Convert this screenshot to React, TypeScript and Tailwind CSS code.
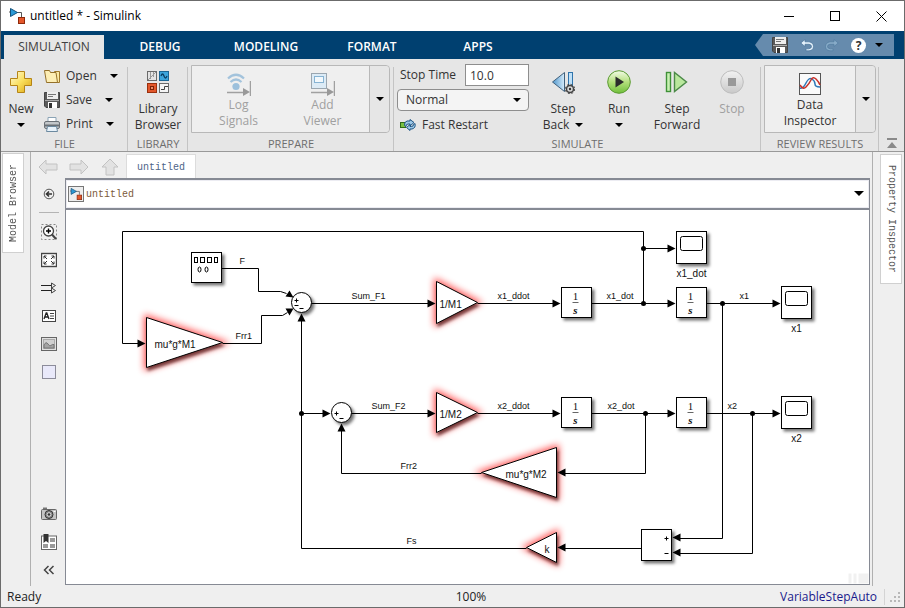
import type { ReactNode } from 'react';
import clsx from 'clsx';

const tabs = ['DEBUG', 'MODELING', 'FORMAT', 'APPS'];

function Caret({ className }: { className?: string }) {
  return (
    <svg width="8" height="4" viewBox="0 0 8 4" className={className} aria-hidden="true">
      <path d="M0 0h8L4 4z" fill="currentColor" />
    </svg>
  );
}

function ModelIcon({ size = 16 }: { size?: number }) {
  return (
    <svg width={size} height={size} viewBox="0 0 16 16" aria-hidden="true">
      <path d="M0 4h2M8 4.5h4.5V9" fill="none" stroke="#555" />
      <path d="M1.5 0.5v8l7-4z" fill="#2b9ad6" stroke="#14537d" />
      <rect x="9.5" y="9.5" width="6" height="6" fill="#e4572b" stroke="#8e2a0b" />
    </svg>
  );
}

function SaveIcon() {
  return (
    <svg width="16" height="16" viewBox="0 0 16 16" aria-hidden="true">
      <path d="M0.5 0.5h15v15H2L0.5 14z" fill="#5a5a5a" stroke="#444" />
      <rect x="3" y="0" width="11" height="7" fill="#eee" />
      <path d="M4 2.5h8M4 4.5h5" stroke="#777" />
      <path d="M1 8.5h14" stroke="#aaa" />
      <rect x="4" y="10" width="9" height="6" fill="#fff" />
      <rect x="5" y="11" width="3" height="5" fill="#333" />
    </svg>
  );
}

function OpenIcon() {
  return (
    <svg width="16" height="13" viewBox="0 0 16 13" aria-hidden="true">
      <path d="M5.500 11.500V2.500h4l1-1h5v11h-8z" fill="#fbe9a4" stroke="#a07a2c" />
      <path d="M0.500 0.500h5l1 2h5.500l1.500 10H2.500z" fill="#fdeeb4" stroke="#94702a" />
    </svg>
  );
}

function PrintIcon() {
  return (
    <svg width="16" height="15" viewBox="0 0 16 15" aria-hidden="true">
      <path d="M4 5V0.500h8V5" fill="#fff" stroke="#8aa3b5" />
      <rect x="0.500" y="4.500" width="15" height="7" rx="1.500" fill="#c3c7ca" stroke="#6b7177" />
      <path d="M1 8.500h14" stroke="#6a7076" strokeWidth="2" />
      <path d="M3.500 9.500h9l1 5H2.500z" fill="#e8f2fa" stroke="#6c8aa0" />
    </svg>
  );
}

function NewIcon() {
  return (
    <svg width="24" height="24" viewBox="0 0 24 24" aria-hidden="true">
      <defs>
        <linearGradient id="gold" x1="0" y1="0" x2="1" y2="1">
          <stop offset="0" stopColor="#fffbe0" />
          <stop offset="0.5" stopColor="#fadf5c" />
          <stop offset="1" stopColor="#d9a213" />
        </linearGradient>
      </defs>
      <path d="M8.500 1.500h7v7h7v7h-7v7h-7v-7h-7v-7h7z" fill="url(#gold)" stroke="#b58416" />
    </svg>
  );
}

function LibraryIcon() {
  return (
    <svg width="22" height="24" viewBox="0 0 22 24" aria-hidden="true">
      <rect x="0.500" y="1.500" width="9" height="9" fill="#e4e4e4" stroke="#6b6b6b" />
      <path d="M3.500 2v7M6.500 2v5M1 10l8-8" fill="none" stroke="#999" />
      <rect x="12.500" y="1.500" width="9" height="9" fill="#3da5dc" stroke="#1d6795" />
      <path d="M14 6q1.500-4 3 0t3 0" fill="none" stroke="#0c3f63" strokeWidth="1.300" />
      <rect x="0.500" y="13.500" width="9" height="9" fill="#e2572c" stroke="#9a300d" />
      <rect x="3.500" y="16.500" width="3" height="3" fill="#f08c68" stroke="#7a2206" />
      <rect x="12.500" y="13.500" width="9" height="9" fill="#f5f5f5" stroke="#6b6b6b" />
      <path d="M14 19.500h3.500v-3H21" fill="none" stroke="#444" />
    </svg>
  );
}

function LogSignalsIcon() {
  return (
    <svg width="24" height="24" viewBox="0 0 24 24" aria-hidden="true">
      <g fill="none" stroke="#a3c3dc" strokeWidth="2.200">
        <path d="M1 5.500q8-7.500 16 0" />
        <path d="M3.500 9q5.500-5 11 0" />
      </g>
      <circle cx="9" cy="13.500" r="3.600" fill="#9cc0dc" />
      <path d="M0 19.500h17M23.500 8v15" stroke="#a0a0a0" strokeWidth="1.500" />
      <path d="M16 15v8l7-4z" fill="#999" />
    </svg>
  );
}

function AddViewerIcon() {
  return (
    <svg width="24" height="24" viewBox="0 0 24 24" aria-hidden="true">
      <rect x="0.500" y="0.500" width="15" height="15" fill="#dcebf6" stroke="#9aa6b0" />
      <rect x="3.500" y="3.500" width="9" height="6" fill="#f2f8fc" stroke="#86b3d3" />
      <path d="M0 19.500h17M23.500 8v15" stroke="#a0a0a0" strokeWidth="1.500" />
      <path d="M16 15v8l7-4z" fill="#999" />
    </svg>
  );
}

function FastRestartIcon() {
  return (
    <svg width="16" height="12" viewBox="0 0 16 12" aria-hidden="true">
      <rect x="0.500" y="3.500" width="5" height="5" fill="#7ac142" stroke="#2f6b1a" />
      <path d="M10 2H7q-3 1-2.500 4.500L6 7.500q0-2.500 2-2.500h2v2l4-3.500L10 0.500z" fill="#9cc7e6" stroke="#1e5584" />
      <path d="M10 10h2q4-1 3-5.500l-1.500 1q0 2-2 2H10v-2l-3.500 3L10 11.500z" fill="#9cc7e6" stroke="#1e5584" />
    </svg>
  );
}

function StepBackIcon() {
  return (
    <svg width="24" height="24" viewBox="0 0 24 24" aria-hidden="true">
      <defs>
        <linearGradient id="steel" x1="0" x2="1">
          <stop offset="0" stopColor="#4f96cc" />
          <stop offset="1" stopColor="#d5ebfa" />
        </linearGradient>
      </defs>
      <path d="M13.500 2.500v19L1.500 12z" fill="url(#steel)" stroke="#41617c" />
      <rect x="17.500" y="2.500" width="4" height="17" fill="#bfe0f7" stroke="#2f74ac" />
      <circle cx="19" cy="19" r="3.500" fill="#ddd" stroke="#444" strokeWidth="1.500" />
      <circle cx="19" cy="19" r="4.700" fill="none" stroke="#444" strokeDasharray="2 1.700" />
      <circle cx="19" cy="19" r="1.200" fill="#333" />
    </svg>
  );
}

function RunIcon() {
  return (
    <svg width="24" height="24" viewBox="0 0 24 24" aria-hidden="true">
      <defs>
        <linearGradient id="lime" x1="0" y1="0" x2="0" y2="1">
          <stop offset="0" stopColor="#f4fbe8" />
          <stop offset="0.5" stopColor="#b4e07c" />
          <stop offset="1" stopColor="#6fbf3a" />
        </linearGradient>
      </defs>
      <circle cx="12" cy="12" r="11.300" fill="url(#lime)" stroke="#5a9a32" />
      <path d="M8.500 6.500v11l8.500-5.500z" fill="#2b2b2b" />
    </svg>
  );
}

function StepForwardIcon() {
  return (
    <svg width="24" height="24" viewBox="0 0 24 24" aria-hidden="true">
      <rect x="1.500" y="2.500" width="4" height="19" fill="#c8f0b2" stroke="#3f9138" strokeWidth="1.400" />
      <path d="M9.500 2.500v19L21.500 12z" fill="#b9e89d" stroke="#4c8a48" strokeWidth="1.400" />
    </svg>
  );
}

function StopIcon() {
  return (
    <svg width="24" height="24" viewBox="0 0 24 24" aria-hidden="true">
      <defs>
        <linearGradient id="ash" x1="0" y1="0" x2="0" y2="1">
          <stop offset="0" stopColor="#f2f2f2" />
          <stop offset="1" stopColor="#c9c9c9" />
        </linearGradient>
      </defs>
      <circle cx="12" cy="12" r="11.300" fill="url(#ash)" stroke="#bdbdbd" />
      <rect x="8" y="8" width="8" height="8" fill="#999" />
    </svg>
  );
}

function InspectorIcon() {
  return (
    <svg width="22" height="24" viewBox="0 0 22 24" aria-hidden="true">
      <rect x="0.500" y="0.500" width="21" height="21" fill="#fbfbfb" stroke="#555" />
      <path d="M1 15q3 1 6-5t6-4 3 5 5 3" fill="none" stroke="#2f78b7" strokeWidth="1.500" />
      <path d="M1 12q3 5 6 2t5-7 5-1 4 6" fill="none" stroke="#c8322b" strokeWidth="1.500" />
    </svg>
  );
}

type ToolButtonProps = {
  icon: ReactNode;
  lines: string[];
  caret?: boolean;
  disabled?: boolean;
  className?: string;
};

function ToolButton({ icon, lines, caret, disabled, className }: ToolButtonProps) {
  const single = lines.length === 1;
  return (
    <button
      type="button"
      disabled={disabled}
      className={clsx('flex flex-col items-center', disabled && 'text-[#a0a0a0]', className)}
    >
      {icon}
      <span className="leading-4">{lines[0]}</span>
      {!single && (
        <span className="flex items-center gap-[6px] leading-4">
          {lines[1]}
          {caret && <Caret className="text-black" />}
        </span>
      )}
      {single && caret && (
        <span className="flex h-4 items-center">
          <Caret className="text-black" />
        </span>
      )}
    </button>
  );
}

function Section({ title, className, children }: { title: string; className?: string; children: ReactNode }) {
  return (
    <section className={clsx('relative flex flex-col', className)}>
      <div className="flex h-[78px]">{children}</div>
      <h2 className="text-center text-[11px] leading-[14px] text-[#6e6e6e]">{title}</h2>
      <div className="absolute top-2 right-0 bottom-0 w-px bg-[#c4c4c4]" />
    </section>
  );
}

function FileRow({ icon, label }: { icon: ReactNode; label: string }) {
  return (
    <button type="button" className="flex h-6 items-center">
      <span className="mr-[6px] flex w-4 justify-center">{icon}</span>
      {label}
      <Caret className="ml-[13px] text-black" />
    </button>
  );
}

function Toolstrip() {
  return (
    <div className="flex h-[93px] shrink-0 border-b border-[#999] bg-[#e6e6e6] text-[12px] text-[#333]">
      <Section title="FILE" className="w-[127px]">
        <ToolButton icon={<NewIcon />} lines={['New']} caret className="w-[40px] pt-[11px] [&>svg]:mb-[7px]" />
        <div className="ml-[3px] flex flex-col items-start pt-[5px]">
          <FileRow icon={<OpenIcon />} label="Open" />
          <FileRow icon={<SaveIcon />} label="Save" />
          <FileRow icon={<PrintIcon />} label="Print" />
        </div>
      </Section>

      <Section title="LIBRARY" className="w-[60px]">
        <ToolButton icon={<LibraryIcon />} lines={['Library', 'Browser']} className="flex-1 pt-[11px] [&>svg]:mb-[7px]" />
      </Section>

      <Section title="PREPARE" className="w-[206px]">
        <div className="mx-[3px] mt-[6px] flex h-[68px] w-[199px] rounded-r border border-[#b8b8b8] bg-[#efefef]">
          <div className="flex flex-1 justify-center">
            <ToolButton icon={<LogSignalsIcon />} lines={['Log', 'Signals']} disabled className="w-[84px] pt-[7px]" />
            <ToolButton icon={<AddViewerIcon />} lines={['Add', 'Viewer']} disabled className="w-[84px] pt-[7px]" />
          </div>
          <button
            type="button"
            aria-label="More prepare tools"
            className="flex w-5 items-center justify-center rounded-r border-l border-[#b8b8b8] bg-[#e6e6e6] text-black"
          >
            <Caret />
          </button>
        </div>
      </Section>

      <Section title="SIMULATE" className="flex-1">
        <div className="ml-[3px] w-[132px] pt-[5px]">
          <div className="flex h-[22px] items-center justify-between pl-[3px]">
            <label htmlFor="stop-time">Stop Time</label>
            <input
              id="stop-time"
              defaultValue="10.0"
              className="h-[22px] w-16 border border-[#8e8e8e] bg-white px-1"
            />
          </div>
          <div className="relative mt-[3px]">
            <select
              aria-label="Simulation mode"
              defaultValue="Normal"
              className="h-[22px] w-full appearance-none rounded border border-[#8e8e8e] bg-[#f4f4f4] px-2 leading-4"
            >
              <option>Normal</option>
            </select>
            <Caret className="pointer-events-none absolute top-[9px] right-2 text-black" />
          </div>
          <button type="button" className="mt-[2px] flex h-6 items-center gap-[6px] pl-[3px]">
            <FastRestartIcon />
            Fast Restart
          </button>
        </div>
        <div className="ml-[6px] flex pt-[11px] [&>button>svg]:mb-[7px]">
          <ToolButton icon={<StepBackIcon />} lines={['Step', 'Back']} caret className="w-14" />
          <ToolButton icon={<RunIcon />} lines={['Run']} caret className="w-14" />
          <ToolButton icon={<StepForwardIcon />} lines={['Step', 'Forward']} className="w-[60px]" />
          <ToolButton icon={<StopIcon />} lines={['Stop']} disabled className="w-[50px]" />
        </div>
      </Section>

      <Section title="REVIEW RESULTS" className="w-[118px]">
        <div className="mx-[3px] mt-[6px] flex h-[68px] flex-1 rounded-r border border-[#b8b8b8] bg-[#efefef]">
          <ToolButton icon={<InspectorIcon />} lines={['Data', 'Inspector']} className="flex-1 pt-[7px]" />
          <button
            type="button"
            aria-label="More review tools"
            className="flex w-5 items-center justify-center rounded-r border-l border-[#b8b8b8] bg-[#e6e6e6] text-black"
          >
            <Caret />
          </button>
        </div>
      </Section>

      <button type="button" aria-label="Minimize toolstrip" className="flex w-[25px] items-end justify-center pb-[2px]">
        <svg width="12" height="11" viewBox="0 0 12 11">
          <path d="M1 0h10v2H1zM6 4l5 6H1z" fill="#8a8a8a" />
        </svg>
      </button>
    </div>
  );
}

function TitleBar() {
  return (
    <header className="flex h-[30px] shrink-0 items-center bg-white text-[12px] text-black">
      <span className="ml-2 w-[21px]">
        <ModelIcon />
      </span>
      <h1 className="flex-1">untitled * - Simulink</h1>
      <button type="button" aria-label="Minimize" className="flex w-[46px] justify-center">
        <svg width="11" height="11" viewBox="0 0 11 11" stroke="#000">
          <path d="M0 5.500h10" />
        </svg>
      </button>
      <button type="button" aria-label="Maximize" className="flex w-[46px] justify-center">
        <svg width="11" height="11" viewBox="0 0 11 11" fill="none" stroke="#000">
          <rect x="0.500" y="0.500" width="9" height="9" />
        </svg>
      </button>
      <button type="button" aria-label="Close" className="flex w-[46px] justify-center">
        <svg width="11" height="11" viewBox="0 0 11 11" stroke="#000">
          <path d="M0.500 0.500l10 10M10.500 0.500l-10 10" />
        </svg>
      </button>
    </header>
  );
}

function TabBar() {
  return (
    <nav className="flex h-7 shrink-0 items-end bg-[#004070] text-[12px]">
      <button type="button" className="mx-[3px] h-6 w-[100px] bg-[#e6e6e6] text-[#404040]">
        SIMULATION
      </button>
      {tabs.map((tab) => (
        <button key={tab} type="button" className="h-6 w-[106px] font-semibold text-white">
          {tab}
        </button>
      ))}
      <div className="mr-[10px] mb-[3px] ml-auto flex h-[22px] w-[139px] items-center bg-[#668bad] pl-[17px] [clip-path:polygon(8px_0,100%_0,100%_100%,8px_100%,0_50%)]">
        <button type="button" aria-label="Save">
          <SaveIcon />
        </button>
        <button type="button" aria-label="Undo" className="ml-3">
          <svg width="14" height="13" viewBox="0 0 14 13">
            <path d="M5 0.500L0.800 4 5 7.500V5.300h4q2.500 0.200 2.500 2.200T8.500 9.800H6v2h3q4.500-0.500 4.500-4.300T9 2.800H5z" fill="#e4f1fb" stroke="#4a7499" strokeWidth="0.700" />
          </svg>
        </button>
        <button type="button" aria-label="Redo" className="ml-[11px]">
          <svg width="14" height="13" viewBox="0 0 14 13">
            <path d="M9 0.500L13.200 4 9 7.500V5.300H5q-2.500 0.200-2.500 2.200t3 2.300H8v2H5Q0.500 11.300 0.500 7.500T5 2.800h4z" fill="#87abc8" stroke="#527da1" strokeWidth="0.700" />
          </svg>
        </button>
        <button type="button" aria-label="Help" className="ml-3 h-[15px] w-[15px] rounded-full bg-white text-[12px] leading-[15px] font-bold text-[#333]">
          ?
        </button>
        <button type="button" aria-label="More" className="ml-[9px] text-black">
          <Caret />
        </button>
      </div>
    </nav>
  );
}

function NavArrow({ label, d }: { label: string; d: string }) {
  return (
    <button type="button" aria-label={label} className="flex w-[31px] items-center justify-center pt-1">
      <svg width="20" height="20" viewBox="0 0 20 20">
        <path d={d} fill="#e2e2e2" stroke="#c2c2c2" strokeLinejoin="round" />
      </svg>
    </button>
  );
}

function PaletteButton({ label, children }: { label: string; children: ReactNode }) {
  return (
    <button type="button" aria-label={label} className="flex h-7 w-full items-center justify-center">
      <svg width="16" height="16" viewBox="0 0 16 16" fill="none" stroke="#444">
        {children}
      </svg>
    </button>
  );
}

function Palette() {
  return (
    <div className="flex w-[34px] shrink-0 flex-col pt-[2px] pb-px pl-[2px]">
      <PaletteButton label="Hide browser">
        <circle cx="8" cy="8" r="4.800" stroke="#555" />
        <path d="M5 8h6M8 5.500L5.500 8 8 10.500" stroke="#333" strokeWidth="1.600" />
      </PaletteButton>
      <div className="mx-[6px] mt-1 mb-[5px] h-px bg-[#b4b4b4]" />
      <PaletteButton label="Zoom">
        <rect x="0.500" y="0.500" width="15" height="15" strokeDasharray="2 2" stroke="#888" />
        <circle cx="7.500" cy="7" r="5" fill="#fff" strokeWidth="1.300" />
        <path d="M5 7h5M7.500 4.500v5" stroke="#000" strokeWidth="1.400" />
        <path d="M11 10.500l4 4.500" strokeWidth="2" />
      </PaletteButton>
      <PaletteButton label="Fit to view">
        <rect x="0.500" y="1.500" width="15" height="13" fill="#fff" strokeWidth="1.400" />
        <path d="M3 6.500V4h2.500M3 4l3 3M10.500 4H13v2.500M13 4l-3 3M3 9.500V12h2.500M3 12l3-3M10.500 12H13V9.500M13 12l-3-3" stroke="#333" />
      </PaletteButton>
      <PaletteButton label="Signals">
        <path d="M0 5.500h11M0 10.500h11" stroke="#222" />
        <path d="M10.500 3l4 2.500-4 2.500zM10.500 8l4 2.500-4 2.500z" fill="#eee" />
      </PaletteButton>
      <PaletteButton label="Annotation">
        <rect x="1.500" y="2.500" width="13" height="11" fill="#fff" />
        <path d="M3 11l2.200-6h0.600L8 11M3.800 9h3.400" stroke="#222" strokeWidth="1.300" />
        <path d="M9 5.500h4M9 8h4M9 10.500h4" stroke="#444" />
      </PaletteButton>
      <PaletteButton label="Image">
        <rect x="0.500" y="1.500" width="15" height="13" fill="#e0e0e0" stroke="#666" />
        <rect x="2.500" y="3.500" width="11" height="9" fill="#d0d0d0" stroke="#aaa" />
        <path d="M3 12V9q2-4 4-1t3 1.500 3-1V12z" fill="#a3a3a3" stroke="#777" />
      </PaletteButton>
      <PaletteButton label="Area">
        <rect x="1.500" y="1.500" width="13" height="13" fill="#e9e9fa" stroke="#8c8c9a" />
      </PaletteButton>
      <div className="flex-1" />
      <PaletteButton label="Screenshot">
        <path d="M2 2.500h4" strokeWidth="2" stroke="#777" />
        <rect x="0.500" y="3.500" width="15" height="10" rx="1" fill="#c4c4c4" stroke="#666" />
        <circle cx="8" cy="8.500" r="4" fill="#888" stroke="#333" />
        <circle cx="8" cy="8.500" r="1.800" fill="#333" stroke="#ddd" />
        <path d="M12.500 5.500h2" stroke="#fff" />
      </PaletteButton>
      <PaletteButton label="Bookmarks">
        <rect x="0.500" y="2" width="15" height="13.500" fill="#fff" stroke="#666" />
        <path d="M9 4h5v4H9zM9 10h5v4H9zM2 10h5v4H2z" fill="#999" stroke="none" />
        <path d="M2.500 0h5v9L5 7 2.500 9z" fill="#333" stroke="none" />
      </PaletteButton>
      <PaletteButton label="Collapse palette">
        <path d="M7.500 4L3.500 8l4 4M12.500 4l-4 4 4 4" strokeWidth="1.500" />
      </PaletteButton>
    </div>
  );
}

// Diagram primitives. Integer coordinates fall on pixel centres.

type Direction = 'right' | 'left' | 'up';

function Arrow({ x, y, dir = 'right' }: { x: number; y: number; dir?: Direction }) {
  const d = {
    right: `M${x} ${y}l-8 -4v8z`,
    left: `M${x} ${y}l8 -4v8z`,
    up: `M${x} ${y}l-4 8h8z`,
  }[dir];
  return <path d={d} fill="#000" />;
}

function Gain({ points, label, x, y }: { points: string; label: string; x: number; y: number }) {
  return (
    <g>
      <polygon points={points} fill="#f00" stroke="#f00" strokeWidth="5" opacity="0.65" filter="url(#glow)" />
      <polygon points={points} fill="#fff" stroke="#000" filter="url(#drop)" />
      <text x={x} y={y} fontSize="10">
        {label}
      </text>
    </g>
  );
}

function Integrator({ x, y }: { x: number; y: number }) {
  return (
    <g textAnchor="middle" fontFamily='"Liberation Serif", serif'>
      <rect x={x} y={y} width="30" height="30" fill="#fff" stroke="#000" filter="url(#shadow)" />
      <text x={x + 14} y={y + 12} fontSize="11">
        1
      </text>
      <path d={`M${x + 11} ${y + 15}h6`} stroke="#666" />
      <text x={x + 14} y={y + 26} fontSize="11" fontStyle="italic" fontWeight="bold">
        s
      </text>
    </g>
  );
}

function Scope({ x, y, label }: { x: number; y: number; label: string }) {
  return (
    <g>
      <rect x={x} y={y} width="30" height="32" fill="#fff" stroke="#000" filter="url(#shadow)" />
      <rect x={x + 4} y={y + 5} width="22" height="14" rx="2" fill="#fff" stroke="#000" />
      <text x={x + 15} y={y + 45} fontSize="10" textAnchor="middle">
        {label}
      </text>
    </g>
  );
}

const signals = [
  'M643 303V231H122V343H140',
  'M221 268H258V291H280L286 293',
  'M222 343H261V315H282L287 312',
  'M311 303H430',
  'M477 303H555',
  'M591 303H670',
  'M643 248H670',
  'M706 303H775',
  'M722 303V538H678',
  'M301 548V318',
  'M301 413H325',
  'M351 413H430',
  'M477 413H555',
  'M591 413H670',
  'M645 413V473H563',
  'M706 413H775',
  'M752 413V553H678',
  'M481 473H341V428',
  'M641 548H563',
  'M526 548H301',
];

const junctions = [
  [643, 248],
  [643, 303],
  [722, 303],
  [301, 413],
  [645, 413],
  [752, 413],
];

const signalLabels = [
  { text: 'F', x: 239, y: 263 },
  { text: 'Frr1', x: 235, y: 338 },
  { text: 'Sum_F1', x: 351, y: 298 },
  { text: 'x1_ddot', x: 497, y: 298 },
  { text: 'x1_dot', x: 606, y: 298 },
  { text: 'x1', x: 739, y: 298 },
  { text: 'Sum_F2', x: 371, y: 408 },
  { text: 'x2_ddot', x: 497, y: 408 },
  { text: 'x2_dot', x: 607, y: 408 },
  { text: 'x2', x: 727, y: 408 },
  { text: 'Frr2', x: 400, y: 468 },
  { text: 'Fs', x: 406, y: 543 },
];

function Diagram() {
  return (
    <svg
      width="803"
      height="374"
      viewBox="65.5 209.5 803 374"
      fontFamily='"Liberation Sans", sans-serif'
      fill="#111"
      className="block shrink-0"
      role="img"
      aria-label="Two-mass model diagram"
    >
      <defs>
        <filter id="shadow" x="-30%" y="-30%" width="170%" height="170%">
          <feDropShadow dx="2.500" dy="2.500" stdDeviation="1.800" floodColor="#000" floodOpacity="0.55" />
        </filter>
        <filter id="drop" x="-30%" y="-30%" width="170%" height="170%">
          <feDropShadow dx="1.500" dy="3" stdDeviation="1.800" floodColor="#200" floodOpacity="0.6" />
        </filter>
        <filter id="glow" x="-60%" y="-60%" width="220%" height="220%">
          <feGaussianBlur stdDeviation="3.500" />
        </filter>
      </defs>

      <Gain points="146,317 222,342 146,367" label="mu*g*M1" x={154} y={347} />
      <Gain points="436,281 477,302 436,323" label="1/M1" x={439} y={307} />
      <Gain points="436,392 477,412 436,432" label="1/M2" x={439} y={417} />
      <Gain points="556,447 481,472 556,497" label="mu*g*M2" x={505} y={477} />
      <Gain points="556,532 526,547 556,562" label="k" x={544} y={552} />

      <g fill="none" stroke="#000">
        {signals.map((d) => (
          <path key={d} d={d} />
        ))}
      </g>
      {junctions.map(([cx, cy]) => (
        <circle key={`${cx}-${cy}`} cx={cx} cy={cy} r="2.500" fill="#000" />
      ))}

      <rect x="191" y="252" width="30" height="30" fill="#fff" stroke="#000" filter="url(#shadow)" />
      <g fill="none" stroke="#000">
        <rect x="194" y="257" width="3" height="5" />
        <rect x="200" y="257" width="4" height="5" />
        <rect x="207" y="257" width="4" height="5" />
        <rect x="214" y="257" width="3" height="5" />
        <ellipse cx="199" cy="269" rx="1.500" ry="2.500" />
        <ellipse cx="206" cy="269" rx="1.500" ry="2.500" />
      </g>

      <circle cx="301" cy="302" r="10" fill="#fff" stroke="#000" filter="url(#shadow)" />
      <path d="M294 300h4M296 298v4M294 305h4M299 308h4" stroke="#000" />
      <circle cx="341" cy="412" r="10" fill="#fff" stroke="#000" filter="url(#shadow)" />
      <path d="M334 413h4M336 411v4M339 418h4" stroke="#000" />

      <rect x="641" y="529" width="30" height="31" fill="#fff" stroke="#000" filter="url(#shadow)" />
      <path d="M664 538h4M666 536v4M664 553h4" stroke="#000" />

      <Integrator x={561} y={287} />
      <Integrator x={676} y={287} />
      <Integrator x={561} y={397} />
      <Integrator x={676} y={397} />
      <Scope x={676} y={231} label="x1_dot" />
      <Scope x={781} y={286} label="x1" />
      <Scope x={781} y={396} label="x2" />

      <path d="M293 297l-4 -7l-4 6zM293 308l-8 0l4 7z" fill="#000" />
      <Arrow x={145} y={343} />
      <Arrow x={435} y={303} />
      <Arrow x={560} y={303} />
      <Arrow x={675} y={303} />
      <Arrow x={675} y={248} />
      <Arrow x={780} y={303} />
      <Arrow x={330} y={413} />
      <Arrow x={435} y={413} />
      <Arrow x={560} y={413} />
      <Arrow x={675} y={413} />
      <Arrow x={780} y={413} />
      <Arrow x={557} y={472} dir="left" />
      <Arrow x={557} y={547} dir="left" />
      <Arrow x={672} y={537} dir="left" />
      <Arrow x={672} y={552} dir="left" />
      <Arrow x={301} y={313} dir="up" />
      <Arrow x={341} y={423} dir="up" />

      {signalLabels.map((l) => (
        <text key={l.text} x={l.x} y={l.y} fontSize="9">
          {l.text}
        </text>
      ))}

      <path d="M848 573h3v10h-3zM853 573h3v10h-3zM858 573h10v10h-10z" fill="#f1f1f1" />
    </svg>
  );
}

function Editor() {
  return (
    <main className="flex min-w-0 flex-1 flex-col pb-px">
      <div className="ml-px flex h-[26px] shrink-0">
        <NavArrow label="Back" d="M1 10L8 3v4h11v6H8v4z" />
        <NavArrow label="Forward" d="M19 10L12 3v4H1v6h11v4z" />
        <NavArrow label="Up" d="M10 2L2 10h4v8h8v-8h4z" />
        <button
          type="button"
          className="mt-[2px] ml-px w-[70px] border border-b-0 border-[#dcdcdc] bg-white pt-[2px] font-[Liberation_Mono,monospace] text-[10px] text-[#4c6488]"
        >
          untitled
        </button>
      </div>
      <div className="flex min-h-0 flex-1">
        <Palette />
        <div className="mr-[2px] flex min-w-0 flex-1 flex-col border border-t-2 border-[#868a94] bg-white">
          <div className="flex h-7 shrink-0 items-center gap-[2px] border border-[#ececf2] pr-1 pl-px">
            <span className="flex h-4 w-4 items-center justify-center border border-[#777] bg-[#eee]">
              <ModelIcon size={12} />
            </span>
            <span className="font-[Liberation_Mono,monospace] text-[10px] text-[#7c5a3a]">untitled</span>
            <button type="button" aria-label="Model history" className="ml-auto text-black">
              <svg width="10" height="6" viewBox="0 0 10 6">
                <path d="M0 0h10L5 5z" fill="#000" />
              </svg>
            </button>
          </div>
          <div className="h-[2px] shrink-0 bg-[#868a94]" />
          <div className="flex min-h-0 flex-1 overflow-hidden">
            <Diagram />
          </div>
        </div>
      </div>
    </main>
  );
}

function StatusBar() {
  return (
    <footer className="grid h-[21px] shrink-0 grid-cols-3 items-center pt-px pr-[3px] pl-[6px] text-[12px] text-[#222]">
      <span>Ready</span>
      <span className="pl-[34px] text-center">100%</span>
      <span className="flex items-center justify-end">
        <a href="#solver" className="border-r border-[#d4d4d4] pr-[7px] leading-4 text-[#1a1a8c]">
          VariableStepAuto
        </a>
        <svg width="12" height="12" viewBox="0 0 12 12" className="ml-1" aria-hidden="true">
          <path d="M9 1h2v2H9zM5 5h2v2H5zM9 5h2v2H9zM1 9h2v2H1zM5 9h2v2H5zM9 9h2v2H9z" fill="#b8b8b8" />
        </svg>
      </span>
    </footer>
  );
}

export default function App() {
  return (
    <div className="flex h-screen flex-col overflow-hidden border border-[#6b6b6b] bg-[#efefef] font-['Open_Sans','Noto_Sans',sans-serif]">
      <TitleBar />
      <TabBar />
      <Toolstrip />
      <div className="flex min-h-0 flex-1">
        <aside className="w-[30px] shrink-0 border-r border-[#b0b0b0] pt-px pl-px">
          <button
            type="button"
            className="h-[100px] w-[22px] rotate-180 border border-[#d0d0d0] bg-white font-[Liberation_Mono,monospace] text-[10px] text-[#555] [writing-mode:vertical-rl]"
          >
            Model Browser
          </button>
        </aside>
        <Editor />
        <aside className="flex w-8 shrink-0 justify-end border-l border-[#b0b0b0] pt-[2px] pr-[2px]">
          <button
            type="button"
            className="h-[130px] w-[22px] border border-[#d0d0d0] bg-white font-[Liberation_Mono,monospace] text-[10px] text-[#555] [writing-mode:vertical-rl]"
          >
            Property Inspector
          </button>
        </aside>
      </div>
      <StatusBar />
    </div>
  );
}
